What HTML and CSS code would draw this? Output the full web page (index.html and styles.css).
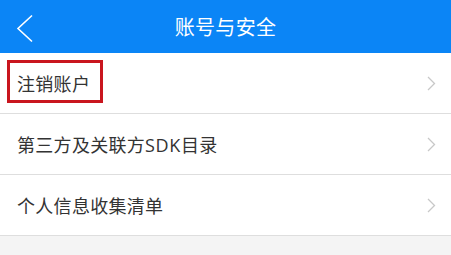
FILE: index.html
```html
<!DOCTYPE html>
<html lang="zh-CN">
<head>
<meta charset="utf-8">
<title>账号与安全</title>
<link rel="stylesheet" href="styles.css">
</head>
<body>
<div class="page">
  <header class="topbar">
    <span class="back">
      <svg width="18" height="30" viewBox="0 0 18 30"><polyline points="16,1.5 2,14.5 16,27.5" fill="none" stroke="#fff" stroke-width="1.6"/></svg>
    </span>
    <h1 class="title">账号与安全</h1>
  </header>
  <ul class="list">
    <li class="item">
      <span class="label">注销账户</span>
      <svg class="chev" width="9" height="15" viewBox="0 0 9 15"><polyline points="1,1 7.5,7.5 1,14" fill="none" stroke="#c8c8c8" stroke-width="1.3"/></svg>
      <span class="mark"></span>
    </li>
    <li class="item">
      <span class="label">第三方及关联方<span class="latin">SDK</span>目录</span>
      <svg class="chev" width="9" height="15" viewBox="0 0 9 15"><polyline points="1,1 7.5,7.5 1,14" fill="none" stroke="#c8c8c8" stroke-width="1.3"/></svg>
    </li>
    <li class="item">
      <span class="label">个人信息收集清单</span>
      <svg class="chev" width="9" height="15" viewBox="0 0 9 15"><polyline points="1,1 7.5,7.5 1,14" fill="none" stroke="#c8c8c8" stroke-width="1.3"/></svg>
    </li>
  </ul>
</div>
</body>
</html>
```

FILE: styles.css
```css
html, body {
  margin: 0;
  padding: 0;
  background: #f4f4f4;
  font-family: "Noto Sans CJK SC", "Noto Sans", sans-serif;
}
.page {
  width: 451px;
  height: 255px;
  overflow: hidden;
  background: #f4f4f4;
}
.topbar {
  position: relative;
  height: 53px;
  background: #0b85f6;
  display: flex;
  align-items: center;
  justify-content: center;
}
.back {
  position: absolute;
  left: 16px;
  top: 14px;
  width: 18px;
  height: 30px;
}
.back svg { display: block; }
.title {
  margin: 0;
  font-size: 20px;
  font-weight: normal;
  color: #fff;
  line-height: 1;
  letter-spacing: 0.3px;
}
.list {
  list-style: none;
  margin: 0;
  padding: 0;
  background: #fff;
}
.item {
  position: relative;
  height: 60px;
  border-bottom: 1px solid #dedede;
  display: flex;
  align-items: center;
  justify-content: space-between;
  padding: 0 15px 0 17px;
}
.label {
  font-size: 18px;
  color: #333;
  line-height: 1;
  letter-spacing: 0.3px;
}
.latin {
  font-family: "Open Sans", "Noto Sans", sans-serif;
  letter-spacing: 0.6px;
}
.chev { display: block; }
.mark {
  position: absolute;
  left: 7px;
  top: 7px;
  width: 90px;
  height: 37px;
  border: 3px solid #c9151e;
}
```
